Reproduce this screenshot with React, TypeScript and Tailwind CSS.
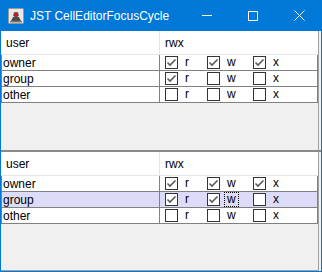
import React from "react";

const font = { fontFamily: '"Liberation Sans", Arial, sans-serif' };

function Check({ on }: { on: boolean }) {
  return (
    <span className="w-[13px] h-[13px] border border-[#333333] bg-white flex items-center justify-center shrink-0">
      {on && (
        <svg width="11" height="11" viewBox="0 0 11 11">
          <path d="M1.5 5.5 L4 8 L9.5 2.5" fill="none" stroke="#5a5a5a" strokeWidth="1.6" />
        </svg>
      )}
    </span>
  );
}

type Perm = { name: string; r: boolean; w: boolean; x: boolean };

function Item({ on, label, w, focus }: { on: boolean; label: string; w: string; focus?: boolean }) {
  return (
    <div className={`flex items-center ${w}`}>
      <Check on={on} />
      <span
        className={`ml-[5px] px-[2px] leading-[13px] ${focus ? "outline outline-1 outline-dotted outline-black" : ""}`}
      >
        {label}
      </span>
    </div>
  );
}

function Table({ rows, selected, focusW }: { rows: Perm[]; selected?: number; focusW?: number }) {
  return (
    <div className="w-[317px] text-[12px] text-black">
      <div className="flex h-[24px] bg-white border-b border-[#e5e5e5]">
        <div className="w-[159px] border-r border-[#e5e5e5] pl-[5px] flex items-center">user</div>
        <div className="flex-1 pl-[5px] flex items-center">rwx</div>
      </div>
      <div className="border-l border-[#808080]">
        {rows.map((p, i) => (
          <div
            key={p.name}
            className={`flex h-[16px] border-b border-[#808080] ${i === selected ? "bg-[#dcdcf8]" : "bg-white"}`}
          >
            <div className="w-[158px] border-r border-[#808080] pl-[1px] flex items-center leading-none">
              {p.name}
            </div>
            <div className="flex-1 flex items-center pl-[5px] border-r border-[#808080]">
              <Item on={p.r} label="r" w="w-[42px]" />
              <Item on={p.w} label="w" w="w-[46px]" focus={focusW === i} />
              <Item on={p.x} label="x" w="w-[40px]" />
            </div>
          </div>
        ))}
      </div>
    </div>
  );
}

export default function App() {
  const top: Perm[] = [
    { name: "owner", r: true, w: true, x: true },
    { name: "group", r: true, w: false, x: false },
    { name: "other", r: false, w: false, x: false },
  ];
  const bottom: Perm[] = [
    { name: "owner", r: true, w: true, x: true },
    { name: "group", r: true, w: true, x: false },
    { name: "other", r: false, w: false, x: false },
  ];
  return (
    <div className="w-[322px] h-[272px] bg-[#0078d7] flex flex-col" style={font}>
      <div className="h-[31px] flex items-center text-white text-[12px] shrink-0">
        <svg className="ml-[8px]" width="16" height="16" viewBox="0 0 16 16">
          <rect x="0.5" y="0.5" width="15" height="15" rx="1" fill="#e8e8e8" stroke="#9a9a9a" />
          <path d="M3 13 L5 9 L8 8 L11 9 L13 13 Z" fill="#4a4a4a" />
          <path d="M6 4 L10 4 L11 8 L5 8 Z" fill="#6a6a6a" />
          <circle cx="8" cy="7" r="2" fill="#d01010" />
          <rect x="2" y="13" width="12" height="1.5" fill="#7a7a7a" />
        </svg>
        <span className="ml-[6px]">JST CellEditorFocusCycle</span>
        <div className="ml-auto flex h-full">
          <div className="w-[46px] flex items-center justify-center">
            <div className="w-[10px] h-[1px] bg-white" />
          </div>
          <div className="w-[46px] flex items-center justify-center">
            <div className="w-[10px] h-[10px] border border-white" />
          </div>
          <div className="w-[46px] flex items-center justify-center">
            <svg width="11" height="11" viewBox="0 0 11 11">
              <path d="M0.5 0.5 L10.5 10.5 M10.5 0.5 L0.5 10.5" stroke="white" strokeWidth="1" />
            </svg>
          </div>
        </div>
      </div>
      <div className="flex-1 mx-[1px] mb-[1px] bg-[#f0f0f0] flex flex-col">
        <div className="h-[119px] border-r border-[#a0a0a0] w-[318px]">
          <Table rows={top} />
        </div>
        <div className="h-[2px] bg-[#8a8a8a]" />
        <div className="flex-1 border-r border-b border-[#a0a0a0] w-[318px]">
          <Table rows={bottom} selected={1} focusW={1} />
        </div>
      </div>
    </div>
  );
}
